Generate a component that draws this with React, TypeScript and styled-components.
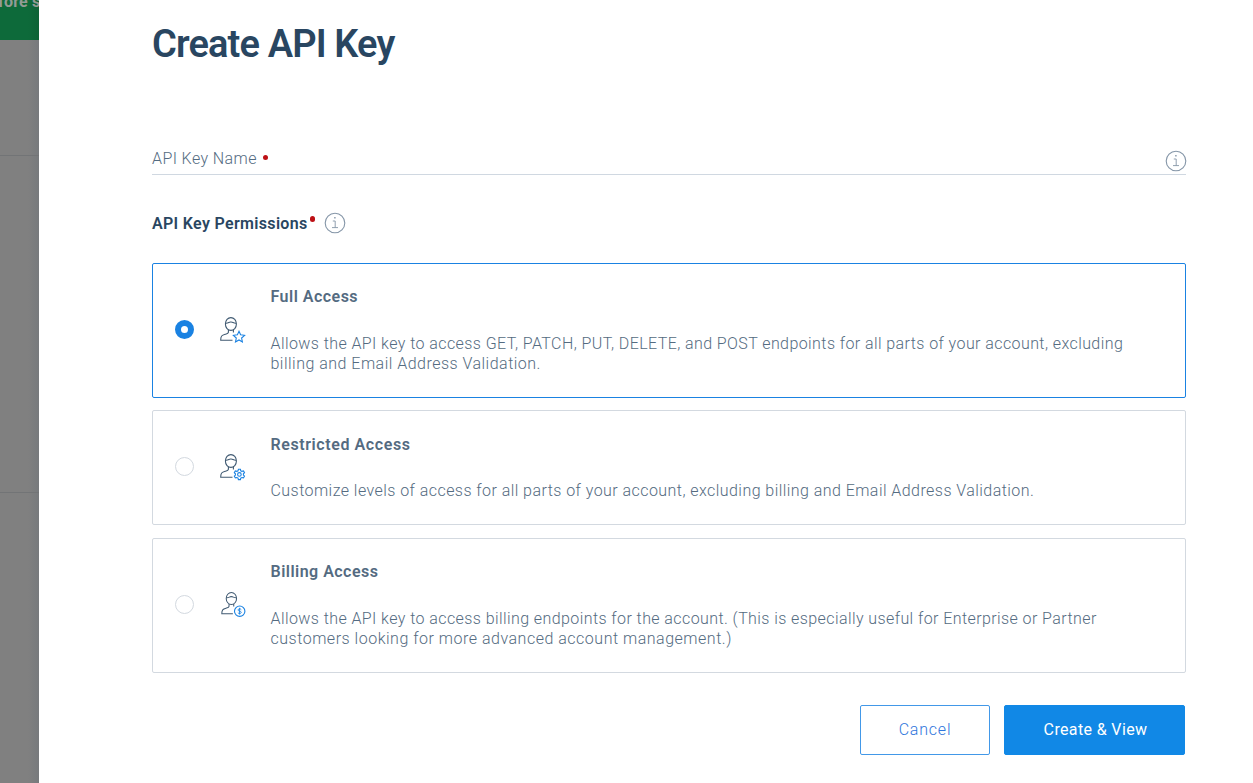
import React from 'react';
import styled, { createGlobalStyle } from 'styled-components';

const GlobalStyle = createGlobalStyle`
  * { box-sizing: border-box; }
  body { margin: 0; background: #fff; font-family: Roboto, "Liberation Sans", sans-serif; font-size: 16px; color: #546b81; }
  h1, h2, h3, p { margin: 0; }
`;

const Page = styled.div`
  display: flex;
  height: 783px;
  overflow: hidden;
`;

const DimmedPage = styled.aside`
  width: 39px;
  flex: none;
  overflow: hidden;
  background: linear-gradient(90deg, #808080 0, #808080 28px, #777a7d 39px);
`;

const Banner = styled.div`
  height: 40px;
  overflow: hidden;
  background: linear-gradient(90deg, #0d6a3a 0, #0d6a3a 28px, #0d6236 39px);
  color: #929b95;
  font-weight: 700;
  line-height: 20px;
  white-space: nowrap;
  letter-spacing: 0.2px;
`;

const BannerText = styled.span`
  display: block;
  margin-top: -8px;
  margin-left: -2px;
`;

const DimmedRow = styled.div<{ $height: number }>`
  height: ${(p) => p.$height}px;
  border-bottom: 1px solid #727476;
`;

const Panel = styled.main`
  flex: 1;
  padding: 20px 67px 0 113px;
  background: #fff;
`;

const Title = styled.h1`
  height: 48px;
  font-size: 38px;
  font-weight: 600;
  line-height: 48px;
  letter-spacing: -0.86px;
  color: #294661;
`;

const NameField = styled.div`
  display: flex;
  align-items: center;
  height: 29px;
  margin-top: 78px;
  border-bottom: 1px solid #d0d8e1;
  font-weight: 300;
  letter-spacing: 0.4px;
  color: #546b81;
`;

const NameLabel = styled.span`
  padding-bottom: 3px;
`;

const Dot = styled.i<{ $gap: number; $lift: number }>`
  width: 5.4px;
  height: 5.4px;
  margin: 0 0 ${(p) => p.$lift}px ${(p) => p.$gap}px;
  border-radius: 50%;
  background: #bd1015;
`;

const Spacer = styled.span`
  flex: 1;
`;

const PermissionsHeading = styled.div`
  display: flex;
  align-items: center;
  height: 22px;
  margin: 37px 0 29px;
`;

const Subtitle = styled.h2`
  font-size: 16px;
  font-weight: 600;
  line-height: 20px;
  letter-spacing: 0.33px;
  color: #294661;
  padding-top: 2px;
`;

const InfoWrap = styled.span<{ $left?: number; $right?: number; $top?: number }>`
  display: flex;
  margin: ${(p) => p.$top ?? 0}px ${(p) => p.$right ?? 0}px 0 ${(p) => p.$left ?? 0}px;
`;

const Options = styled.div`
  display: flex;
  flex-direction: column;
`;

const Card = styled.label<{ $selected?: boolean; $gap?: number }>`
  display: flex;
  align-items: center;
  margin-bottom: ${(p) => p.$gap ?? 0}px;
  padding: 23px 40px 23px 22px;
  border: 1px solid ${(p) => (p.$selected ? '#1a82e2' : '#d3d9e0')};
  border-radius: 2px;
`;

const Radio = styled.span<{ $selected?: boolean }>`
  flex: none;
  width: 19px;
  height: 19px;
  margin-bottom: 2px;
  border: ${(p) => (p.$selected ? '6px solid #1a82e2' : '1px solid #d3d9e0')};
  border-radius: 50%;
  background: #fff;
`;

const IconSlot = styled.span`
  display: flex;
  flex: none;
  width: 28px;
  margin: 0 23.5px 1px 25px;
`;

const CardTitle = styled.h3<{ $spacing: number; $top: number }>`
  height: 20px;
  padding-top: ${(p) => p.$top}px;
  font-size: 16px;
  font-weight: 600;
  line-height: 20px;
  letter-spacing: ${(p) => p.$spacing}px;
  color: #546b81;
`;

const CardText = styled.p`
  margin-top: 27px;
  font-weight: 300;
  line-height: 20px;
  white-space: nowrap;
  color: #546b81;
`;

const Line = styled.span<{ $spacing: number }>`
  display: block;
  letter-spacing: ${(p) => p.$spacing}px;
`;

const Actions = styled.footer`
  display: flex;
  justify-content: flex-end;
  gap: 14px;
  padding: 32px 1px 0 0;
`;

const Button = styled.button<{ $primary?: boolean }>`
  width: ${(p) => (p.$primary ? 181 : 130)}px;
  height: 50px;
  padding: 0 0 1px ${(p) => (p.$primary ? 2 : 0)}px;
  border: 1px solid ${(p) => (p.$primary ? '#1188e6' : '#4298e8')};
  border-radius: 2px;
  background: ${(p) => (p.$primary ? '#1188e6' : '#fff')};
  color: ${(p) => (p.$primary ? '#fff' : '#2f76dc')};
  font: ${(p) => (p.$primary ? 400 : 300)} 16px Roboto, sans-serif;
  letter-spacing: ${(p) => (p.$primary ? 0.36 : 0.8)}px;
`;

const InfoIcon = () => (
  <svg width="22" height="22" viewBox="0 0 22 22" fill="none" stroke="#8495a7">
    <circle cx="11" cy="11" r="9.8" strokeWidth="1.1" />
    <path d="M8.8 9h2.4v6.6M8 15.6h6" strokeWidth=".9" />
    <path d="M10.2 5.8h1.4" strokeWidth="1.4" />
  </svg>
);

type Kind = 'star' | 'gear' | 'dollar';

const UserIcon = ({ kind }: { kind: Kind }) => (
  <svg width="28" height="28" viewBox="0 0 28 28" fill="none" strokeWidth="1.1">
    <g stroke="#405a72" transform={kind === 'dollar' ? 'translate(1.2 0) scale(.94)' : undefined}>
      <ellipse cx="11.9" cy="8" rx="5.5" ry="6.4" />
      <path d="M6.6 7.2c2.6.4 3.5-1.5 5.2-1.2 1.8-.3 2.7 1.5 5.3 1.2M9.4 13.8v2.5c-.2 1.2-1.6 1.5-3.2 2-3.4 1-4.5 1.5-4.5 6h11.8M14.4 13.8v2.6" />
    </g>
    <g stroke="#1a82e2">
      {kind === 'star' && (
        <path d="m20 15.3 1.6 3.5 4 .5-3 2.7.8 4-3.4-2-3.5 2 .8-4-2.9-2.7 4-.5z" />
      )}
      {kind === 'gear' && (
        <>
          <path d="M19.4 16.3h2l.4 1.5 1.1.6 1.6-.4 1 1.7-1.1 1.1v1.3l1.1 1.1-1 1.7-1.6-.4-1.1.6-.4 1.5h-2l-.4-1.5-1.1-.6-1.6.4-1-1.7 1.1-1.1v-1.3l-1.1-1.1 1-1.7 1.6.4 1.1-.6z" />
          <circle cx="20.4" cy="21.4" r="1.8" />
        </>
      )}
      {kind === 'dollar' && (
        <>
          <circle cx="20.7" cy="20.2" r="5.2" />
          <path d="M22.3 18.7c-.4-.6-1-.8-1.7-.8-2 0-2 2 .1 2.3 2.1.3 2.1 2.3-.1 2.3-.7 0-1.3-.2-1.7-.8M20.6 16.8v6.8" strokeWidth=".9" />
        </>
      )}
    </g>
  </svg>
);

interface Option {
  title: string;
  titleSpacing: number;
  titleTop: number;
  lines: { text: string; spacing: number }[];
  kind: Kind;
  gap: number;
}

const options: Option[] = [
  {
    title: 'Full Access',
    titleSpacing: 0.48,
    titleTop: 0,
    lines: [
      {
        text: 'Allows the API key to access GET, PATCH, PUT, DELETE, and POST endpoints for all parts of your account, excluding',
        spacing: 0.417,
      },
      { text: 'billing and Email Address Validation.', spacing: 0.485 },
    ],
    kind: 'star',
    gap: 12,
  },
  {
    title: 'Restricted Access',
    titleSpacing: 0.59,
    titleTop: 1,
    lines: [
      {
        text: 'Customize levels of access for all parts of your account, excluding billing and Email Address Validation.',
        spacing: 0.447,
      },
    ],
    kind: 'gear',
    gap: 13,
  },
  {
    title: 'Billing Access',
    titleSpacing: 0.48,
    titleTop: 0,
    lines: [
      {
        text: 'Allows the API key to access billing endpoints for the account. (This is especially useful for Enterprise or Partner',
        spacing: 0.417,
      },
      { text: 'customers looking for more advanced account management.)', spacing: 0.51 },
    ],
    kind: 'dollar',
    gap: 0,
  },
];

export default function App() {
  return (
    <Page>
      <GlobalStyle />
      <DimmedPage>
        <Banner>
          <BannerText>fore s</BannerText>
        </Banner>
        <DimmedRow $height={116} />
        <DimmedRow $height={337} />
      </DimmedPage>
      <Panel>
        <Title>Create API Key</Title>
        <NameField>
          <NameLabel>API Key Name</NameLabel>
          <Dot $gap={6} $lift={5} />
          <Spacer />
          <InfoWrap $right={-1} $top={1}>
            <InfoIcon />
          </InfoWrap>
        </NameField>
        <PermissionsHeading>
          <Subtitle>API Key Permissions</Subtitle>
          <Dot $gap={2} $lift={8} />
          <InfoWrap $left={9}>
            <InfoIcon />
          </InfoWrap>
        </PermissionsHeading>
        <Options>
          {options.map((option, i) => (
            <Card key={option.title} $selected={i === 0} $gap={option.gap}>
              <Radio $selected={i === 0} />
              <IconSlot>
                <UserIcon kind={option.kind} />
              </IconSlot>
              <div>
                <CardTitle $spacing={option.titleSpacing} $top={option.titleTop}>
                  {option.title}
                </CardTitle>
                <CardText>
                  {option.lines.map((line) => (
                    <Line key={line.text} $spacing={line.spacing}>
                      {line.text}
                    </Line>
                  ))}
                </CardText>
              </div>
            </Card>
          ))}
        </Options>
        <Actions>
          <Button>Cancel</Button>
          <Button $primary>Create &amp; View</Button>
        </Actions>
      </Panel>
    </Page>
  );
}
